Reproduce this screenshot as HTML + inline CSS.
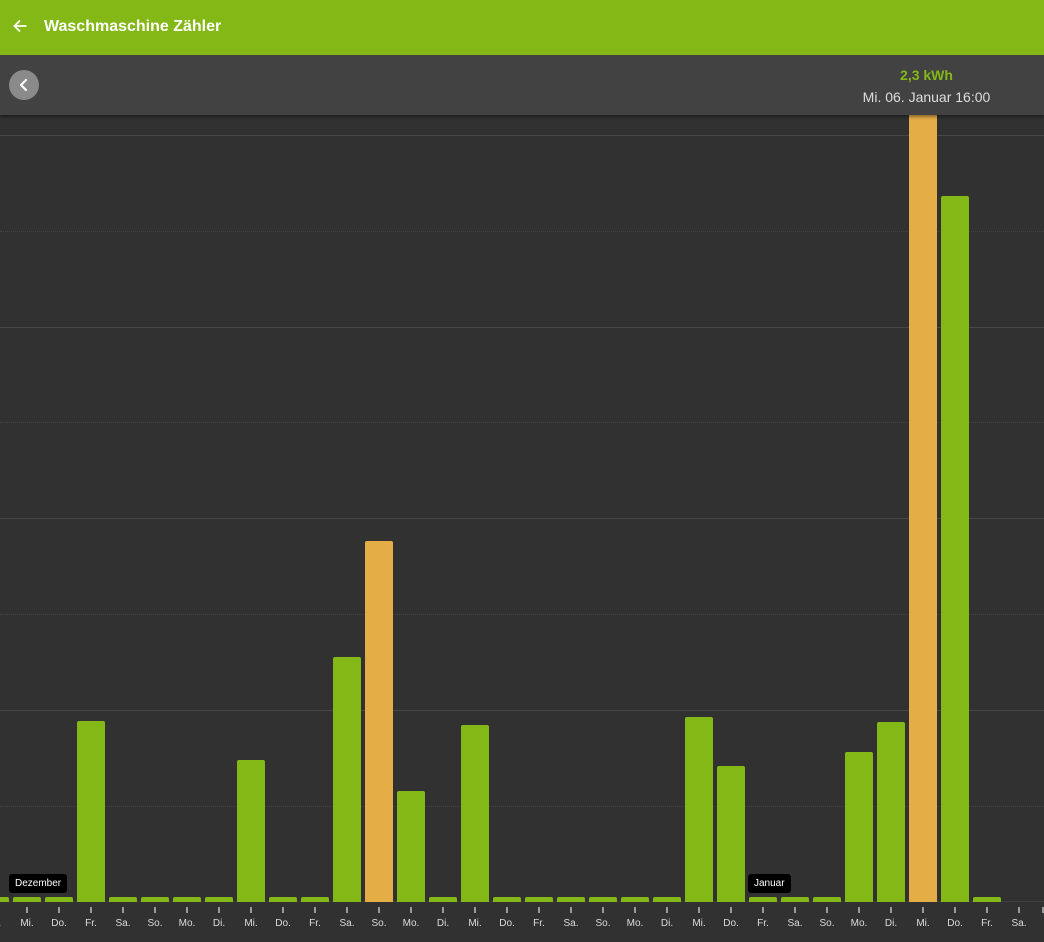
<!DOCTYPE html>
<html><head><meta charset="utf-8"><style>
*{margin:0;padding:0;box-sizing:border-box}
body{width:1044px;height:942px;overflow:hidden;background:#313131;font-family:"Liberation Sans",sans-serif;position:relative}
.hdr{position:absolute;left:0;top:0;width:1044px;height:55px;background:#84b817;color:#fff}
.hdr .t{position:absolute;left:44px;top:18px;font-size:16px;font-weight:bold}
.hdr svg{position:absolute;left:11px;top:17px}
.tb{position:absolute;left:0;top:55px;width:1044px;height:60px;background:#424242;box-shadow:0 2px 3px rgba(0,0,0,.4)}
.bk{position:absolute;left:9px;top:15px;width:30px;height:30px;border-radius:50%;background:#8a8a8a}
.v{position:absolute;left:840px;width:173px;text-align:center}
.v1{top:12px;color:#84b817;font-weight:bold;font-size:14px}
.v2{top:34px;color:#ddd;font-size:14px}
.g{position:absolute;left:0;width:1044px;height:0;border-top:1px solid #474747}
.gd{border-top:1px dotted #444}
.b{position:absolute;width:28px;bottom:40px;background:#84b817;border-radius:2px 2px 0 0}
.o{background:#e5ad45}
.ax{position:absolute;left:0;top:901px;width:1044px;height:1px;background:#3e3e3e}
.l{position:absolute;top:918px;width:40px;text-align:center;font-size:10px;color:#ddd}
.tk{position:absolute;top:907px;width:2px;height:6px;background:#999}
.tip{position:absolute;top:874px;height:19px;background:#000;color:#fff;font-size:10px;line-height:19px;padding:0 6px;border-radius:3px}
</style></head><body>
<div class="g" style="top:135px"></div>
<div class="g gd" style="top:231px"></div>
<div class="g" style="top:327px"></div>
<div class="g gd" style="top:422px"></div>
<div class="g" style="top:518px"></div>
<div class="g gd" style="top:614px"></div>
<div class="g" style="top:710px"></div>
<div class="g gd" style="top:806px"></div>
<div class="ax"></div>

<div class="b" style="left:-19px;top:897px"></div>
<div class="b" style="left:13px;top:897px"></div>
<div class="b" style="left:45px;top:897px"></div>
<div class="b" style="left:77px;top:721px"></div>
<div class="b" style="left:109px;top:897px"></div>
<div class="b" style="left:141px;top:897px"></div>
<div class="b" style="left:173px;top:897px"></div>
<div class="b" style="left:205px;top:897px"></div>
<div class="b" style="left:237px;top:760px"></div>
<div class="b" style="left:269px;top:897px"></div>
<div class="b" style="left:301px;top:897px"></div>
<div class="b" style="left:333px;top:657px"></div>
<div class="b o" style="left:365px;top:541px"></div>
<div class="b" style="left:397px;top:791px"></div>
<div class="b" style="left:429px;top:897px"></div>
<div class="b" style="left:461px;top:725px"></div>
<div class="b" style="left:493px;top:897px"></div>
<div class="b" style="left:525px;top:897px"></div>
<div class="b" style="left:557px;top:897px"></div>
<div class="b" style="left:589px;top:897px"></div>
<div class="b" style="left:621px;top:897px"></div>
<div class="b" style="left:653px;top:897px"></div>
<div class="b" style="left:685px;top:717px"></div>
<div class="b" style="left:717px;top:766px"></div>
<div class="b" style="left:749px;top:897px"></div>
<div class="b" style="left:781px;top:897px"></div>
<div class="b" style="left:813px;top:897px"></div>
<div class="b" style="left:845px;top:752px"></div>
<div class="b" style="left:877px;top:722px"></div>
<div class="b o" style="left:909px;top:110px"></div>
<div class="b" style="left:941px;top:196px"></div>
<div class="b" style="left:973px;top:897px"></div>

<div class="tk" style="left:-6px"></div><div class="l" style="left:-25px">Di.</div>
<div class="tk" style="left:26px"></div><div class="l" style="left:7px">Mi.</div>
<div class="tk" style="left:58px"></div><div class="l" style="left:39px">Do.</div>
<div class="tk" style="left:90px"></div><div class="l" style="left:71px">Fr.</div>
<div class="tk" style="left:122px"></div><div class="l" style="left:103px">Sa.</div>
<div class="tk" style="left:154px"></div><div class="l" style="left:135px">So.</div>
<div class="tk" style="left:186px"></div><div class="l" style="left:167px">Mo.</div>
<div class="tk" style="left:218px"></div><div class="l" style="left:199px">Di.</div>
<div class="tk" style="left:250px"></div><div class="l" style="left:231px">Mi.</div>
<div class="tk" style="left:282px"></div><div class="l" style="left:263px">Do.</div>
<div class="tk" style="left:314px"></div><div class="l" style="left:295px">Fr.</div>
<div class="tk" style="left:346px"></div><div class="l" style="left:327px">Sa.</div>
<div class="tk" style="left:378px"></div><div class="l" style="left:359px">So.</div>
<div class="tk" style="left:410px"></div><div class="l" style="left:391px">Mo.</div>
<div class="tk" style="left:442px"></div><div class="l" style="left:423px">Di.</div>
<div class="tk" style="left:474px"></div><div class="l" style="left:455px">Mi.</div>
<div class="tk" style="left:506px"></div><div class="l" style="left:487px">Do.</div>
<div class="tk" style="left:538px"></div><div class="l" style="left:519px">Fr.</div>
<div class="tk" style="left:570px"></div><div class="l" style="left:551px">Sa.</div>
<div class="tk" style="left:602px"></div><div class="l" style="left:583px">So.</div>
<div class="tk" style="left:634px"></div><div class="l" style="left:615px">Mo.</div>
<div class="tk" style="left:666px"></div><div class="l" style="left:647px">Di.</div>
<div class="tk" style="left:698px"></div><div class="l" style="left:679px">Mi.</div>
<div class="tk" style="left:730px"></div><div class="l" style="left:711px">Do.</div>
<div class="tk" style="left:762px"></div><div class="l" style="left:743px">Fr.</div>
<div class="tk" style="left:794px"></div><div class="l" style="left:775px">Sa.</div>
<div class="tk" style="left:826px"></div><div class="l" style="left:807px">So.</div>
<div class="tk" style="left:858px"></div><div class="l" style="left:839px">Mo.</div>
<div class="tk" style="left:890px"></div><div class="l" style="left:871px">Di.</div>
<div class="tk" style="left:922px"></div><div class="l" style="left:903px">Mi.</div>
<div class="tk" style="left:954px"></div><div class="l" style="left:935px">Do.</div>
<div class="tk" style="left:986px"></div><div class="l" style="left:967px">Fr.</div>
<div class="tk" style="left:1018px"></div><div class="l" style="left:999px">Sa.</div>
<div class="tk" style="left:1042px"></div><div class="l" style="left:1031px">So.</div>

<div class="tip" style="left:9px">Dezember</div>
<div class="tip" style="left:748px">Januar</div>

<div class="tb">
<div class="bk"><svg width="30" height="30" viewBox="0 0 30 30"><path d="M17 10 L12 15 L17 20" stroke="#fff" stroke-width="2.2" fill="none" stroke-linecap="round" stroke-linejoin="round"/></svg></div>
<div class="v v1">2,3 kWh</div>
<div class="v v2">Mi. 06. Januar 16:00</div>
</div>
<div class="hdr">
<svg width="18" height="18" viewBox="0 0 18 18"><path d="M15.5 9H3.5M9 3.5L3.5 9 9 14.5" stroke="#fff" stroke-width="1.7" fill="none"/></svg>
<div class="t">Waschmaschine Zähler</div>
</div>
</body></html>
